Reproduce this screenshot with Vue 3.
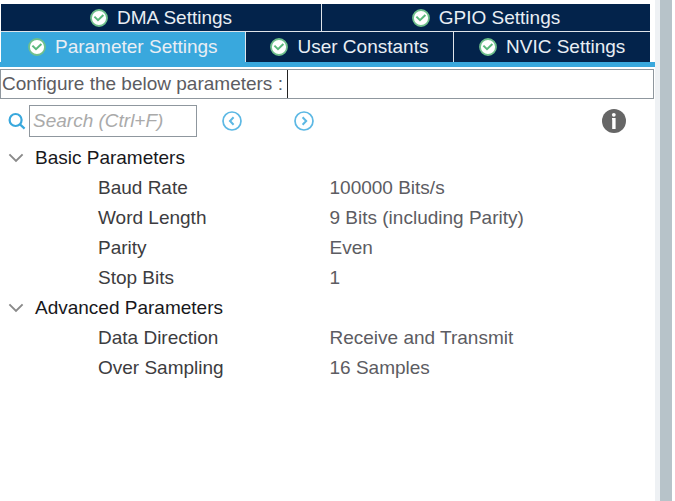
<script setup>
import { ref } from 'vue'

const topTabs = ['DMA Settings', 'GPIO Settings']
const mainTabs = ['Parameter Settings', 'User Constants', 'NVIC Settings']
const active = ref('Parameter Settings')
const search = ref('')
const groups = ref([
  {
    name: 'Basic Parameters',
    open: true,
    rows: [
      ['Baud Rate', '100000 Bits/s'],
      ['Word Length', '9 Bits (including Parity)'],
      ['Parity', 'Even'],
      ['Stop Bits', '1'],
    ],
  },
  {
    name: 'Advanced Parameters',
    open: true,
    rows: [
      ['Data Direction', 'Receive and Transmit'],
      ['Over Sampling', '16 Samples'],
    ],
  },
])
</script>

<template>
  <div class="window">
    <main class="panel">
      <nav class="tabs">
        <div v-for="(row, r) in [topTabs, mainTabs]" :key="r" class="tab-row" :class="r ? 'three' : 'two'">
          <button
            v-for="tab in row"
            :key="tab"
            type="button"
            class="tab"
            :class="{ active: tab === active }"
            @click="active = tab"
          >
            <svg class="check" viewBox="0 0 18 18" aria-hidden="true">
              <circle cx="9" cy="9" r="8" fill="#fff" stroke="#6fc08c" stroke-width="1.8" />
              <path d="M4.4 7.6 8 11.2 13.4 6" fill="none" stroke="#5ab87c" stroke-width="2" />
            </svg>
            <span>{{ tab }}</span>
          </button>
        </div>
      </nav>

      <div class="notice"><span class="notice-text">Configure the below parameters :</span></div>

      <div class="toolbar">
        <label class="search-label" for="search" aria-label="Search">
          <svg class="lens" viewBox="0 0 18 18" aria-hidden="true">
            <circle cx="7.6" cy="8" r="6" />
            <path d="M12 12.4 16.6 16.6" />
          </svg>
        </label>
        <input id="search" v-model="search" class="search" type="text" placeholder="Search (Ctrl+F)" />
        <button type="button" class="round prev" aria-label="Previous">
          <svg viewBox="0 0 20 20">
            <circle cx="10" cy="10" r="9" />
            <path class="arrow" d="M11.6 6.2 8 10 11.6 13.8" />
          </svg>
        </button>
        <button type="button" class="round next" aria-label="Next">
          <svg viewBox="0 0 20 20">
            <circle cx="10" cy="10" r="9" />
            <path class="arrow" d="M8.6 6.2 12.2 10 8.6 13.8" />
          </svg>
        </button>
        <button type="button" class="info" aria-label="Information">
          <svg viewBox="0 0 24 24">
            <circle cx="12" cy="12" r="12" fill="#666" />
            <circle cx="11.8" cy="5.8" r="1.9" fill="#fff" />
            <path d="M10 9h3.6v11h-3.4v-9.4H10z" fill="#fff" />
          </svg>
        </button>
      </div>

      <table class="params">
        <tbody v-for="group in groups" :key="group.name">
          <tr>
            <th colspan="2" scope="rowgroup">
              <button type="button" class="group" :aria-expanded="group.open" @click="group.open = !group.open">
                <svg class="chevron" viewBox="0 0 16 10" aria-hidden="true"><path d="M1.4 1.4 8 8 14.6 1.4" /></svg>
                <span>{{ group.name }}</span>
              </button>
            </th>
          </tr>
          <template v-if="group.open">
            <tr v-for="[name, value] in group.rows" :key="name">
              <td class="name">{{ name }}</td>
              <td class="value">{{ value }}</td>
            </tr>
          </template>
        </tbody>
      </table>
    </main>
    <div class="gutter"></div>
  </div>
</template>

<style>
body {
  margin: 0;
  background: #fff;
}
</style>

<style scoped>
.window {
  display: flex;
  min-height: 100vh;
  font: 19px/30px "Liberation Sans", Arial, sans-serif;
  color: #3c3c40;
}
.panel {
  flex: 1;
  min-width: 0;
}
button {
  border: 0;
  padding: 0;
  background: none;
  font: inherit;
  color: inherit;
  cursor: pointer;
}
.tabs {
  padding-top: 4px;
  border-bottom: 5px solid #39a8dd;
}
.tab-row {
  display: grid;
  gap: 1px;
  margin: 0 5px 0 1px;
  background: #dfe4ea;
}
.two {
  grid-template-columns: 320fr 328fr;
  grid-template-rows: 27px;
  border-bottom: 1px solid #dfe4ea;
}
.three {
  grid-template-columns: 244fr 208fr 196fr;
  grid-template-rows: 30px;
}
.tab {
  display: flex;
  align-items: center;
  justify-content: center;
  gap: 9px;
  background: #03234b;
  color: #e9eef4;
  white-space: nowrap;
}
.tab.active {
  background: #39a8dd;
}
.check {
  width: 18px;
  height: 18px;
}
.notice {
  display: flex;
  height: 28px;
  margin: 2px 1px 0 0;
  border: 1px solid #8f979e;
  line-height: 28px;
  color: #5c5c62;
}
.notice-text {
  padding: 0 4px 0 1px;
  border-right: 1px solid #222;
}
.toolbar {
  display: flex;
  align-items: center;
  height: 44px;
  padding: 0 29px 0 8px;
}
.search-label {
  display: flex;
  width: 21px;
}
.lens {
  width: 18px;
  height: 18px;
  fill: none;
  stroke: #39a8dd;
  stroke-width: 2.2;
}
.search {
  box-sizing: border-box;
  width: 168px;
  height: 32px;
  padding: 0 3px;
  border: 1px solid #8f979e;
  border-radius: 0;
  font: italic 19px "Liberation Sans", Arial, sans-serif;
  color: #3c3c40;
}
.search::placeholder {
  color: #aaa;
  opacity: 1;
}
.round {
  display: flex;
  margin-left: 25px;
}
.next {
  margin-left: 52px;
}
.round svg {
  width: 20px;
  height: 20px;
  fill: none;
  stroke: #5cb8e4;
  stroke-width: 1.7;
}
.round .arrow {
  stroke-width: 2;
}
.info {
  display: flex;
  margin-left: auto;
}
.info svg {
  width: 24px;
  height: 24px;
}
.params {
  width: 100%;
  border-collapse: collapse;
  table-layout: fixed;
}
th,
td {
  height: 30px;
  padding: 0;
  text-align: left;
  font-weight: normal;
}
.group {
  display: flex;
  align-items: center;
  gap: 11px;
  padding-left: 8px;
  color: #18181c;
}
.chevron {
  width: 16px;
  height: 10px;
  fill: none;
  stroke: #8a8a8a;
  stroke-width: 1.9;
}
.name {
  padding-left: 98px;
}
.value {
  padding-left: 2px;
  color: #5c5c62;
}
.gutter {
  box-sizing: border-box;
  width: 20px;
  border-left: 5px solid #eef1f4;
  border-right: 3px solid #fff;
  background: #b7c3c9;
}
</style>
